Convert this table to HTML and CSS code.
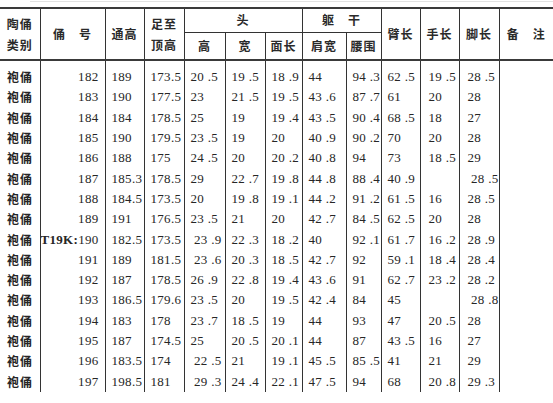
FILE: index.html
```html
<!DOCTYPE html>
<html lang="zh">
<head>
<meta charset="utf-8">
<title>陶俑尺寸表</title>
<link rel="stylesheet" href="styles.css">
</head>
<body>
<div class="page">
  <div class="scanline"></div>
  <table class="data">
    <colgroup>
      <col class="c-type"><col class="c-no"><col class="c-h"><col class="c-foot">
      <col class="c-hh"><col class="c-hw"><col class="c-face">
      <col class="c-sh"><col class="c-waist">
      <col class="c-arm"><col class="c-hand"><col class="c-leg"><col class="c-note">
    </colgroup>
    <thead>
      <tr class="h1">
        <th rowspan="2" class="two">陶俑<br>类别</th>
        <th rowspan="2" class="wide">俑&emsp;号</th>
        <th rowspan="2">通高</th>
        <th rowspan="2" class="two">足至<br>顶高</th>
        <th colspan="3" class="group">头</th>
        <th colspan="2" class="group">躯&emsp;干</th>
        <th rowspan="2">臂长</th>
        <th rowspan="2">手长</th>
        <th rowspan="2">脚长</th>
        <th rowspan="2" class="last">备&emsp;注</th>
      </tr>
      <tr class="h2">
        <th>高</th><th>宽</th><th>面长</th><th>肩宽</th><th>腰围</th>
      </tr>
    </thead>
    <tbody>
      <tr class="spacer"><td></td><td></td><td></td><td></td><td></td><td></td><td></td><td></td><td></td><td></td><td></td><td></td><td class="last"></td></tr>
      <tr><td class="kind">袍俑</td><td class="no">182</td><td>189</td><td>173.5</td><td>20 .5</td><td>19 .5</td><td>18 .9</td><td>44</td><td>94 .3</td><td>62 .5</td><td class="hand">19 .5</td><td class="leg">28 .5</td><td class="last"></td></tr>
      <tr><td class="kind">袍俑</td><td class="no">183</td><td>190</td><td>177.5</td><td>23</td><td>21 .5</td><td>19 .5</td><td>43 .6</td><td>87 .7</td><td>61</td><td class="hand">20</td><td class="leg">28</td><td class="last"></td></tr>
      <tr><td class="kind">袍俑</td><td class="no">184</td><td>184</td><td>178.5</td><td>25</td><td>19</td><td>19 .4</td><td>43 .5</td><td>90 .4</td><td>68 .5</td><td class="hand">18</td><td class="leg">27</td><td class="last"></td></tr>
      <tr><td class="kind">袍俑</td><td class="no">185</td><td>190</td><td>179.5</td><td>23 .5</td><td>19</td><td>20</td><td>40 .9</td><td>90 .2</td><td>70</td><td class="hand">20</td><td class="leg">28</td><td class="last"></td></tr>
      <tr><td class="kind">袍俑</td><td class="no">186</td><td>188</td><td>175</td><td>24 .5</td><td>20</td><td>20 .2</td><td>40 .8</td><td>94</td><td>73</td><td class="hand">18 .5</td><td class="leg">29</td><td class="last"></td></tr>
      <tr><td class="kind">袍俑</td><td class="no">187</td><td>185.3</td><td>178.5</td><td>29</td><td>22 .7</td><td>19 .8</td><td>44 .8</td><td>88 .4</td><td>40 .9</td><td class="hand"></td><td class="leg">&nbsp;28 .5</td><td class="last"></td></tr>
      <tr><td class="kind">袍俑</td><td class="no">188</td><td>184.5</td><td>173.5</td><td>20</td><td>19 .8</td><td>19 .1</td><td>44 .2</td><td>91 .2</td><td>61 .5</td><td class="hand">16</td><td class="leg">28 .5</td><td class="last"></td></tr>
      <tr><td class="kind">袍俑</td><td class="no">189</td><td>191</td><td>176.5</td><td>23 .5</td><td>21</td><td>20</td><td>42 .7</td><td>84 .5</td><td>62 .5</td><td class="hand">20</td><td class="leg">28</td><td class="last"></td></tr>
      <tr><td class="kind">袍俑</td><td class="no"><b class="site">T19K:</b>190</td><td>182.5</td><td>173.5</td><td>&nbsp;23 .9</td><td>22 .3</td><td>18 .2</td><td>40</td><td>92 .1</td><td>61 .7</td><td class="hand">16 .2</td><td class="leg">28 .9</td><td class="last"></td></tr>
      <tr><td class="kind">袍俑</td><td class="no">191</td><td>189</td><td>181.5</td><td>&nbsp;23 .6</td><td>20 .3</td><td>18 .5</td><td>42 .7</td><td>92</td><td>59 .1</td><td class="hand">18 .4</td><td class="leg">28 .4</td><td class="last"></td></tr>
      <tr><td class="kind">袍俑</td><td class="no">192</td><td>187</td><td>178.5</td><td>26 .9</td><td>22 .8</td><td>19 .4</td><td>43 .6</td><td>91</td><td>62 .7</td><td class="hand">23 .2</td><td class="leg">28 .2</td><td class="last"></td></tr>
      <tr><td class="kind">袍俑</td><td class="no">193</td><td>186.5</td><td>179.6</td><td>23 .5</td><td>20</td><td>19 .5</td><td>42 .4</td><td>84</td><td>45</td><td class="hand"></td><td class="leg">&nbsp;28 .8</td><td class="last"></td></tr>
      <tr><td class="kind">袍俑</td><td class="no">194</td><td>183</td><td>178</td><td>23 .7</td><td>18 .5</td><td>19</td><td>44</td><td>93</td><td>47</td><td class="hand">20 .5</td><td class="leg">28</td><td class="last"></td></tr>
      <tr><td class="kind">袍俑</td><td class="no">195</td><td>187</td><td>174.5</td><td>25</td><td>20 .5</td><td>20 .1</td><td>44</td><td>87</td><td>43 .5</td><td class="hand">16</td><td class="leg">27</td><td class="last"></td></tr>
      <tr><td class="kind">袍俑</td><td class="no">196</td><td>183.5</td><td>174</td><td>&nbsp;22 .5</td><td>21</td><td>19 .1</td><td>45 .5</td><td>85 .5</td><td>41</td><td class="hand">21</td><td class="leg">29</td><td class="last"></td></tr>
      <tr><td class="kind">袍俑</td><td class="no">197</td><td>198.5</td><td>181</td><td>&nbsp;29 .3</td><td>24 .4</td><td>22 .1</td><td>47 .5</td><td>94</td><td>68</td><td class="hand">20 .8</td><td class="leg">29 .3</td><td class="last"></td></tr>
    </tbody>
  </table>
</div>
</body>
</html>
```

FILE: styles.css
```css
html, body {
  margin: 0;
  padding: 0;
  background: #ffffff;
}

.page {
  width: 553px;
  height: 403px;
  overflow: hidden;
  color: #262626;
  font-family: "Liberation Serif", "Noto Sans CJK SC", serif;
}

.scanline {
  height: 0;
  margin: 1px 0 5px 30px;
  border-top: 1px solid #e2e2e2;
}

.data {
  width: 553px;
  table-layout: fixed;
  border-collapse: collapse;
  border-top: 2px solid #3a3a3a;
}

.c-type { width: 40px; }
.c-no { width: 65px; }
.c-h { width: 39px; }
.c-foot { width: 40px; }
.c-hh { width: 41px; }
.c-hw { width: 40px; }
.c-face { width: 37px; }
.c-sh { width: 44px; }
.c-waist { width: 35px; }
.c-arm { width: 39px; }
.c-hand { width: 39px; }
.c-leg { width: 40px; }
.c-note { width: 54px; }

.data th,
.data td {
  border-right: 1px solid #333333;
  padding: 0;
  vertical-align: middle;
  white-space: nowrap;
}

.data .last {
  border-right: none;
}

.data th {
  font-family: "Noto Sans CJK SC", sans-serif;
  font-weight: 700;
  font-size: 12px;
  letter-spacing: 1px;
  line-height: 20px;
  text-align: center;
  color: #2a2a2a;
}

.h1 { height: 24px; }
.h2 { height: 28px; }

.data th[rowspan] {
  border-bottom: 2px solid #3a3a3a;
}

.h2 th {
  border-bottom: 2px solid #3a3a3a;
}

.data th.group {
  border-bottom: 1px solid #333333;
  line-height: 16px;
}

.data th.two {
  line-height: 21px;
}

.data tbody tr {
  height: 20.3px;
}

.data tbody tr.spacer {
  height: 7px;
}

.data td {
  font-family: "Liberation Serif", "Times New Roman", serif;
  font-size: 13px;
  letter-spacing: 0.3px;
  line-height: 16px;
  padding-left: 6px;
  text-align: left;
}

.data td.kind {
  font-family: "Noto Sans CJK SC", sans-serif;
  font-weight: 700;
  font-size: 12px;
  letter-spacing: 1px;
  padding-left: 7px;
}

.data td.no {
  text-align: right;
  padding-left: 0;
  padding-right: 6px;
}

.data td.hand,
.data td.leg {
  padding-left: 8px;
}

.site {
  font-weight: 700;
  letter-spacing: 0.3px;
}
```
